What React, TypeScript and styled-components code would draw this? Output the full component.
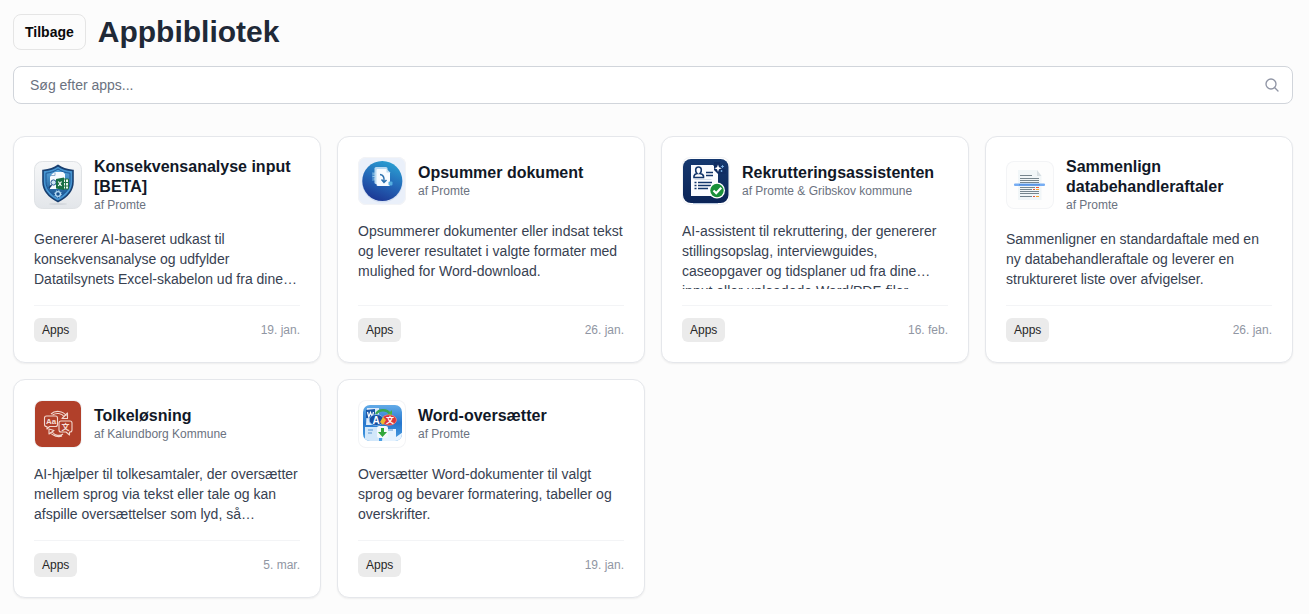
import React from "react";
import styled, { createGlobalStyle } from "styled-components";

const GlobalStyle = createGlobalStyle`
  *, *::before, *::after { box-sizing: border-box; }
  body {
    margin: 0;
    background: #fcfcfc;
    color: #111827;
    font-family: "Liberation Sans", Arial, Helvetica, sans-serif;
  }
`;

const Page = styled.main`
  padding: 14px 16px 16px 13px;
`;

const Header = styled.header`
  display: flex;
  align-items: center;
  gap: 12px;
  margin-bottom: 16px;
`;

const BackButton = styled.button`
  height: 36px;
  padding: 0 11px;
  border: 1px solid #e5e5e5;
  border-radius: 8px;
  background: #fcfcfc;
  color: #0a0a0a;
  font: 700 14px/20px "Liberation Sans", Arial, sans-serif;
  cursor: pointer;
`;

const Heading = styled.h1`
  margin: 0;
  color: #1f2937;
  font-size: 30px;
  line-height: 36px;
  font-weight: 700;
`;

const SearchBox = styled.label`
  display: flex;
  align-items: center;
  height: 38px;
  margin-bottom: 32px;
  padding: 0 12px 0 16px;
  border: 1px solid #d1d5db;
  border-radius: 8px;
  background: #fff;
  color: #9095a5;
`;

const SearchInput = styled.input`
  flex: 1;
  min-width: 0;
  padding: 0;
  border: 0;
  outline: 0;
  background: transparent;
  color: #111827;
  font: 400 14px/20px "Liberation Sans", Arial, sans-serif;
  &::placeholder { color: #6b7280; opacity: 1; }
`;

const Grid = styled.section`
  display: grid;
  grid-template-columns: repeat(auto-fill, minmax(280px, 1fr));
  gap: 16px;
`;

const Card = styled.article`
  display: flex;
  flex-direction: column;
  padding: 20px;
  border: 1px solid #e5e7eb;
  border-radius: 12px;
  background: #fff;
  box-shadow: 0 1px 2px rgba(0, 0, 0, 0.06);
`;

const CardHeader = styled.div`
  display: flex;
  align-items: center;
  gap: 12px;
  margin-bottom: 16px;
`;

const Logo = styled.div<{ $bg: string }>`
  flex: none;
  width: 48px;
  height: 48px;
  overflow: hidden;
  border-radius: 8px;
  background: ${(p) => p.$bg};
  box-shadow: inset 0 0 0 1px #f3f4f6;
  svg { display: block; }
`;

const CardTitle = styled.h2`
  margin: 0;
  font-size: 16px;
  line-height: 20px;
  font-weight: 700;
`;

const Author = styled.p`
  margin: 0;
  color: #6b7280;
  font-size: 12px;
  line-height: 16px;
`;

const Description = styled.p`
  display: -webkit-box;
  -webkit-box-orient: vertical;
  -webkit-line-clamp: 3;
  flex: 1;
  overflow: hidden;
  margin: 0 0 16px;
  color: #374151;
  font-size: 14px;
  line-height: 20px;
`;

const CardFooter = styled.footer`
  display: flex;
  align-items: center;
  justify-content: space-between;
  padding-top: 12px;
  border-top: 1px solid #f3f4f6;
`;

const Tag = styled.span`
  padding: 4px 8px;
  border-radius: 6px;
  background: #ebebeb;
  color: #262626;
  font-size: 12px;
  line-height: 16px;
`;

const DateText = styled.time`
  color: #9096a3;
  font-size: 12px;
  line-height: 16px;
`;

const SearchIcon = () => (
  <svg width="16" height="16" viewBox="0 0 24 24" fill="none" stroke="currentColor" strokeWidth="2" strokeLinecap="round" aria-hidden="true">
    <circle cx="10.5" cy="10.5" r="7.5" />
    <path d="M21 21l-5.2-5.2" />
  </svg>
);

const ShieldLogo = () => (
  <svg width="48" height="48" viewBox="0 0 48 48" aria-hidden="true">
    <defs>
      <linearGradient id="sh-bg" x1="0" y1="0" x2="0" y2="1">
        <stop offset="0" stopColor="#f6f7f8" />
        <stop offset="1" stopColor="#e3e6ea" />
      </linearGradient>
      <linearGradient id="sh-in" x1="0" y1="0" x2="0" y2="1">
        <stop offset="0" stopColor="#58a8de" />
        <stop offset="1" stopColor="#174f8c" />
      </linearGradient>
    </defs>
    <rect x=".5" y=".5" width="47" height="47" rx="8" fill="url(#sh-bg)" stroke="#dfe2e5" />
    <ellipse cx="24" cy="43" rx="9" ry="1" fill="#d3d7dc" />
    <path d="M24 4.5c4.500 3.500 9.500 4.500 15 5v11c0 9-6 15.500-15 20-9-4.500-15-11-15-20v-11c5.500-.5 10.500-1.500 15-5z" fill="#4594d0" stroke="#183f70" strokeWidth="1.600" />
    <path d="M24 8c3.500 2.500 7.500 3.700 12 4.200v8.300c0 7.500-5 12.500-12 16.500-7-4-12-9-12-16.500v-8.300c4.500-.5 8.500-1.700 12-4.200z" fill="url(#sh-in)" stroke="#1d5796" strokeWidth="1" />
    <path d="M18 13l3-2h8l2 2v15H16V16z" fill="#f5faff" />
    <path d="M17 14.500h4v-3" stroke="#8cacca" fill="none" />
    <circle cx="19.500" cy="21.500" r="2.600" fill="#cfe5f7" stroke="#24578f" />
    <path d="M17.500 24l-2.500 3" stroke="#183f70" strokeWidth="1.600" />
    <path d="M28 18h6.500v10H28z" fill="#e9f5ed" stroke="#207447" />
    <path d="M31.500 18v10M28 21.500h6.500M28 25h6.500" stroke="#207447" />
    <path d="M22 18l8-1.500v12.500l-8-1.500z" fill="#176f43" />
    <path d="M24.300 20.500l3.200 4.500M27.500 20.500L24.300 25" stroke="#fff" strokeWidth="1.200" />
    <circle cx="24" cy="33" r="2.400" fill="#174f8c" stroke="#b8ddf5" strokeWidth="1.300" />
    <circle cx="24" cy="33" r="3.300" fill="none" stroke="#b8ddf5" strokeDasharray="1.200 1.390" />
  </svg>
);

const SummaryLogo = () => (
  <svg width="48" height="48" viewBox="0 0 48 48" aria-hidden="true">
    <defs>
      <linearGradient id="su-bg" x1=".7" y1="0" x2=".3" y2="1">
        <stop offset="0" stopColor="#2aa0d2" />
        <stop offset=".5" stopColor="#2468b8" />
        <stop offset="1" stopColor="#1c3592" />
      </linearGradient>
    </defs>
    <circle cx="24.300" cy="25" r="20.500" fill="#d3dff2" />
    <circle cx="24.300" cy="24" r="20" fill="url(#su-bg)" />
    <path d="M14 15h6v9h-6z" fill="#74b3df" opacity=".45" />
    <path d="M14.500 17h5M14.500 19.500h5M15.500 22h4" stroke="#acd5ef" strokeWidth=".8" />
    <rect x="16.500" y="10" width="13" height="17" rx="1.500" fill="#b9d9f0" />
    <path d="M19.500 12h9l3.500 3.500V28q0 1-1 1H20q-1.500 0-1.500-1.500V13q0-1 1-1z" fill="#f7fbff" />
    <path d="M28.500 12v3.500H32z" fill="#bed9ef" />
    <path d="M22 17.500c3.500.5 4.500 3 4 7M23.500 22.500l2.500 3 2.500-2.500" fill="none" stroke="#2c70ae" strokeWidth="1.500" />
    <rect x="30.500" y="24.500" width="4" height="4" rx="1" fill="#55aee0" />
  </svg>
);

const RecruitLogo = () => (
  <svg width="48" height="48" viewBox="0 0 48 48" aria-hidden="true">
    <defs>
      <linearGradient id="re-bg" x1="0" y1="0" x2="0" y2="1">
        <stop offset="0" stopColor="#15386f" />
        <stop offset="1" stopColor="#0b2457" />
      </linearGradient>
    </defs>
    <rect x="1" y="2" width="45.500" height="44" rx="8" fill="url(#re-bg)" />
    <path d="M11 46.500h25" stroke="#b9c9df" />
    <path d="M9 8h22l5 6v25H9z" fill="#fbfcff" />
    <path d="M32 5h6v7h6v5h-8l-4-4z" fill="#102d63" />
    <path d="M12 20.500v-1.500q.5-2 3-2.500c-2-2-2-6.500 1.500-6.500s3.500 4.500 1.500 6.500q3 .5 3.500 2.500v1.500z" fill="#fff" stroke="#14366a" strokeWidth="1.600" />
    <path d="M24 15.500h7M24 18.500h7" stroke="#14366a" strokeWidth="1.500" />
    <path d="M12.500 22.500h17" stroke="#d7dfe9" />
    <path d="M12.500 25.500h2M16 25.500h14M12.500 28.500h2M16 28.500h13M12.500 31.500h2M16 31.500h10" stroke="#14366a" strokeWidth="1.500" />
    <path d="M36 7.500l1 2.700 2.700 1-2.700 1-1 2.800-1-2.800-2.700-1 2.700-1z" fill="#fff" />
    <path d="M40.500 8v3M39 9.500h3M39.500 13v2M38.500 14h2" stroke="#80b8ed" strokeWidth=".8" />
    <circle cx="35" cy="33.500" r="8" fill="#fff" />
    <circle cx="35" cy="33.500" r="6.700" fill="#199039" />
    <path d="M31.500 33.500l2.700 2.700 5-5.500" fill="none" stroke="#fff" strokeWidth="2.200" />
  </svg>
);

const CompareLogo = () => (
  <svg width="48" height="48" viewBox="0 0 48 48" aria-hidden="true">
    <path d="M12 9h19l4.500 6v24H12z" fill="#f1f6f8" />
    <path d="M31 15V9l4.500 6z" fill="#d7dfe3" />
    <path d="M14 14.500h12M14 17.500h19M14 19.500h19M14 21.500h19M14 26.500h15M14 28.500h12M14 30.500h19M14 32.500h19M14 35.500h12" stroke="#76858e" strokeWidth="1" />
    <path d="M30 26.500h3M27 28.500h2M27 35.500h2" stroke="#e6533f" />
    <path d="M30 28.500h3M30 35.500h3" stroke="#f5a329" />
    <rect x="8" y="22.500" width="31" height="2.500" rx="1" fill="#76adf3" />
    <path d="M13 23.800h21" stroke="#508bdc" />
  </svg>
);

const InterpreterLogo = () => (
  <svg width="48" height="48" viewBox="0 0 48 48" aria-hidden="true">
    <rect x="1" y="1" width="46" height="46" rx="7" fill="#b1402a" />
    <g fill="none" stroke="#f2d7ce" strokeWidth="1.100" strokeLinejoin="round">
      <path d="M12.500 16h9q2 0 2 2v6.500q0 2-2 2h-6L13 29v-2.500h-.5q-2 0-2-2V18q0-2 2-2z" />
      <path d="M27 21h9q2 0 2 2v7q0 2-2 2h-.5v3L32 32h-5q-2 0-2-2v-7q0-2 2-2z" />
      <path d="M17 14c4-4 12-3.500 15.500 2M18.500 15c4-2.500 9-2 12 2M33.500 13v5.500H28z" />
      <path d="M29 34c-3 2.500-8 1.500-11-2M28 36c-4 1.500-9 0-12-3.500M15 34v-5l5 1.500z" />
    </g>
    <text x="17" y="24" textAnchor="middle" fontFamily="Liberation Sans, sans-serif" fontSize="8" fontWeight="700" fill="#f6dfd8">Aa</text>
    <text x="31.500" y="29.500" textAnchor="middle" fontFamily="Noto Sans CJK SC, sans-serif" fontSize="8" fontWeight="700" fill="#f6dfd8">文</text>
  </svg>
);

const WordLogo = () => (
  <svg width="48" height="48" viewBox="0 0 48 48" aria-hidden="true">
    <defs>
      <linearGradient id="wo-bg" x1="0" y1="0" x2="0" y2="1">
        <stop offset="0" stopColor="#62abe8" />
        <stop offset=".5" stopColor="#2676cd" />
        <stop offset="1" stopColor="#4ba0e3" />
      </linearGradient>
      <clipPath id="wo-clip"><rect x="5" y="5" width="39" height="36" rx="7" /></clipPath>
    </defs>
    <g clipPath="url(#wo-clip)">
      <rect x="5" y="5" width="39" height="36" fill="url(#wo-bg)" />
      <path d="M9 8h12v17H8z" fill="#dceafa" />
      <path d="M7 27h14v14H7z" fill="#d2e7fa" />
      <path d="M25 29h13v8l7-5v10H24z" fill="#e6f3ff" />
      <path d="M10 30h5M10 33h4M29 30h6" stroke="#5b97d2" />
      <path d="M8 10l9-1v10l-9-1z" fill="#1b57a7" />
      <path d="M9.500 12l1.300 5 1.700-4.500 1.700 4.500L15.500 12" fill="none" stroke="#fff" strokeWidth="1.200" />
      <path d="M18 14c3-5 11-5 14 0" fill="none" stroke="#39a651" strokeWidth="2.300" />
      <path d="M29 15h5v-5z" fill="#49b53e" />
      <ellipse cx="31" cy="20" rx="7.500" ry="5.200" fill="#db3438" stroke="#f58b80" strokeWidth=".7" />
      <ellipse cx="18.500" cy="20" rx="7.300" ry="5.500" fill="#174fa2" stroke="#8ac2f0" strokeWidth=".8" />
      <path d="M25 17l3 3-3 5-3-3z" fill="#efb82f" />
      <rect x="19" y="26" width="11" height="12" rx="2" fill="#f3f8fb" />
      <path d="M23 28h3v4h3l-4.500 5-4.500-5h3z" fill="#32a63b" />
    </g>
    <text x="18" y="24" textAnchor="middle" fontFamily="Liberation Sans, sans-serif" fontSize="10" fontWeight="700" fill="#fff">A</text>
    <text x="32" y="23" textAnchor="middle" fontFamily="Noto Sans CJK SC, sans-serif" fontSize="8" fontWeight="700" fill="#fff">文</text>
  </svg>
);

type App = {
  title: string;
  author: string;
  description: string;
  date: string;
  logo: React.ReactNode;
  bg?: string;
};

const apps: App[] = [
  {
    title: "Konsekvensanalyse input [BETA]",
    author: "Promte",
    description: "Genererer AI-baseret udkast til konsekvensanalyse og udfylder Datatilsynets Excel-skabelon ud fra dine oplysninger.",
    date: "19. jan.",
    logo: <ShieldLogo />,
  },
  {
    title: "Opsummer dokument",
    author: "Promte",
    description: "Opsummerer dokumenter eller indsat tekst og leverer resultatet i valgte formater med mulighed for Word-download.",
    date: "26. jan.",
    logo: <SummaryLogo />,
    bg: "#eaf0fa",
  },
  {
    title: "Rekrutteringsassistenten",
    author: "Promte & Gribskov kommune",
    description: "AI-assistent til rekruttering, der genererer stillingsopslag, interviewguides, caseopgaver og tidsplaner ud fra dine input eller uploadede Word/PDF-filer.",
    date: "16. feb.",
    logo: <RecruitLogo />,
  },
  {
    title: "Sammenlign databehandleraftaler",
    author: "Promte",
    description: "Sammenligner en standardaftale med en ny databehandleraftale og leverer en struktureret liste over afvigelser.",
    date: "26. jan.",
    logo: <CompareLogo />,
    bg: "#fdfdfd",
  },
  {
    title: "Tolkeløsning",
    author: "Kalundborg Kommune",
    description: "AI-hjælper til tolkesamtaler, der oversætter mellem sprog via tekst eller tale og kan afspille oversættelser som lyd, så samtalen bliver lettere.",
    date: "5. mar.",
    logo: <InterpreterLogo />,
  },
  {
    title: "Word-oversætter",
    author: "Promte",
    description: "Oversætter Word-dokumenter til valgt sprog og bevarer formatering, tabeller og overskrifter.",
    date: "19. jan.",
    logo: <WordLogo />,
  },
];

export default function App() {
  return (
    <>
      <GlobalStyle />
      <Page>
        <Header>
          <BackButton type="button">Tilbage</BackButton>
          <Heading>Appbibliotek</Heading>
        </Header>
        <SearchBox>
          <SearchInput type="text" placeholder="Søg efter apps..." aria-label="Søg efter apps" />
          <SearchIcon />
        </SearchBox>
        <Grid>
          {apps.map((app) => (
            <Card key={app.title}>
              <CardHeader>
                <Logo $bg={app.bg ?? "#fff"}>{app.logo}</Logo>
                <div>
                  <CardTitle>{app.title}</CardTitle>
                  <Author>af {app.author}</Author>
                </div>
              </CardHeader>
              <Description>{app.description}</Description>
              <CardFooter>
                <Tag>Apps</Tag>
                <DateText>{app.date}</DateText>
              </CardFooter>
            </Card>
          ))}
        </Grid>
      </Page>
    </>
  );
}
